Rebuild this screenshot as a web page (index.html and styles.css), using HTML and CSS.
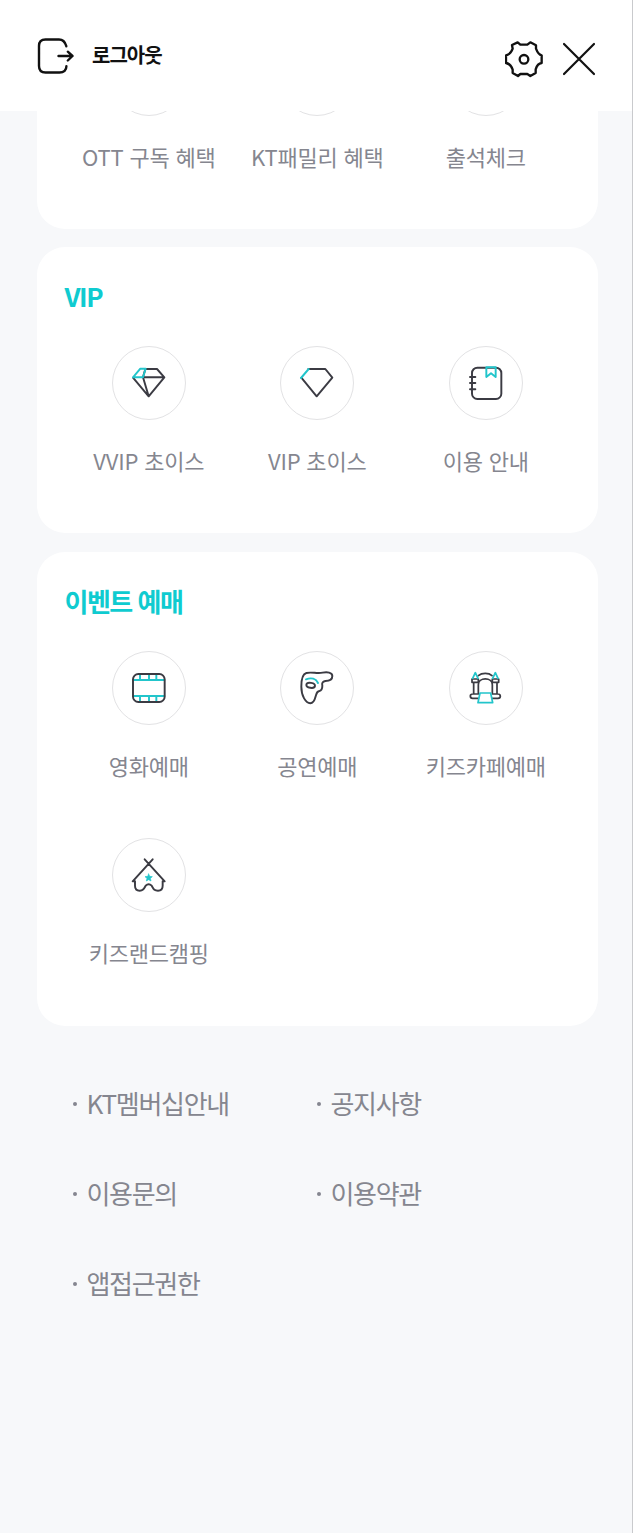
FILE: index.html
```
<!DOCTYPE html>
<html lang="ko">
<head>
<meta charset="utf-8">
<title>전체메뉴</title>
<link rel="stylesheet" href="styles.css">
</head>
<body>
<div class="app">
  <header class="header">
    <a class="logout">
      <svg class="logout-icon" viewBox="0 0 38 38"><path d="M29.3 9.2V9C28 4.600 26 2.500 22 2.500H8.500Q2 2.500 2 9V29Q2 35.500 8.500 35.500H22.500C27 35.500 29.400 33 29.400 29.200M21.500 19H35.500M30.800 14.700L35.500 19L30.800 23.500"/></svg>
      <span>로그아웃</span>
    </a>
    <div class="actions">
      <svg class="gear-icon" viewBox="45 58 114 114"><path d="M66 73L83 65L91 72H112L121 65L138 74V84C141 92 145 102 155 104V127C145 128 140 136 137 146V157L121 166L112 160H91L84 166L68 157V147C65 138 60 129 48 127V104C58 102 65 93 68 84Z"/><circle cx="102" cy="116" r="13"/></svg>
      <svg class="close-icon" viewBox="0 0 34 34"><path d="M2 2L32 32M32 2L2 32"/></svg>
    </div>
  </header>

  <main class="content">
    <section class="card card-scrolled">
      <ul class="grid">
        <li class="item"><span class="circle"></span><span class="label">OTT 구독 혜택</span></li>
        <li class="item"><span class="circle"></span><span class="label">KT패밀리 혜택</span></li>
        <li class="item"><span class="circle"></span><span class="label">출석체크</span></li>
      </ul>
    </section>

    <section class="card">
      <h2 class="title">VIP</h2>
      <ul class="grid">
        <li class="item"><span class="circle"><svg class="icon" viewBox="96 94 102 102"><path d="M135 103H171L193 128H129M129 128L146 185L193 128M146 185L99 129M129 128L136 103"/><path class="accent" d="M99 128L121 102H137L129 128Z"/></svg></span><span class="label">VVIP 초이스</span></li>
        <li class="item"><span class="circle"><svg class="icon" viewBox="99 94 102 102"><path d="M124 103H175L196 129L149 185L103 129"/><path class="accent" d="M102 130L125 103"/></svg></span><span class="label">VIP 초이스</span></li>
        <li class="item"><span class="circle"><svg class="icon" viewBox="102 93 102 102"><rect x="111" y="98" width="88" height="94" rx="16"/><path d="M105 126H121M105 144H121M105 163H121"/><path class="accent" d="M154 97H182V126L168 115L154 126Z"/></svg></span><span class="label">이용 안내</span></li>
      </ul>
    </section>

    <section class="card">
      <h2 class="title">이벤트 예매</h2>
      <ul class="grid">
        <li class="item"><span class="circle"><svg class="icon" viewBox="96 92 102 102"><path class="accent" d="M100 119H193M100 167H193M120 101V119M147 101V119M169 101V119M120 167V184M147 167V184M169 167V184"/><rect x="99" y="101" width="95" height="84" rx="16"/></svg></span><span class="label">영화예매</span></li>
        <li class="item"><span class="circle"><svg class="icon" viewBox="99 92 102 102"><path d="M118 98C135 94 150 101 167 97C180 94 196 96 196 107C196 119 187 122 175 122C167 124 164 128 166 136C166 145 165 150 157 152C149 153 149 158 146 168C143 180 137 189 130 189C116 188 103 167 103 139C103 119 106 101 118 98Z"/><ellipse cx="131" cy="135" rx="13" ry="7.500" transform="rotate(9 131 135)"/><path class="accent" d="M117 117C133 111 147 115 153 128"/></svg></span><span class="label">공연예매</span></li>
        <li class="item"><span class="circle"><svg class="icon icon-fine" viewBox="103 92 102 102"><path d="M131 106C142 97 162 97 172 106M131 157V133C131 110 173 110 173 133V157M112 116H131V126H112ZM173 116H192V126H173ZM117 126V160M187 126V160M131 174H114Q107 174 107 167Q107 161 115 161H131M173 161H189Q197 161 197 168Q197 174 190 174H173"/><path class="accent" d="M114 114L122 97L130 114M174 114L182 97L190 114M136 158H168L174 187H130Z"/></svg></span><span class="label">키즈카페예매</span></li>
        <li class="item"><span class="circle"><svg class="icon" viewBox="96 93 102 102"><path d="M134 97L194 163H188V176Q188 191 174 191C162 191 161 186 155 176Q146 167 137 176C131 187 128 191 119 191Q105 191 105 176V163H98L158 97"/><path class="star" d="M146 141L149 148L157 149L151 154L153 162L146 158L139 162L141 154L135 149L143 148Z"/></svg></span><span class="label">키즈랜드캠핑</span></li>
      </ul>
    </section>

    <ul class="links">
      <li><span>KT멤버십안내</span></li>
      <li><span>공지사항</span></li>
      <li><span>이용문의</span></li>
      <li><span>이용약관</span></li>
      <li><span>앱접근권한</span></li>
    </ul>
  </main>
</div>
</body>
</html>
```
FILE: styles.css
```
* { box-sizing: border-box; }

body {
  margin: 0;
  background: #f7f8fa;
  font-family: "Noto Sans CJK KR", "Noto Sans", sans-serif;
  color: #85868f;
}

ul { list-style: none; margin: 0; padding: 0; }

svg {
  fill: none;
  stroke-linecap: round;
  stroke-linejoin: round;
}

.app {
  height: 1533px;
  display: flex;
  flex-direction: column;
  border-right: 1px solid #c9cacd;
}

.header {
  flex: none;
  height: 111px;
  padding: 0 36px 0 37px;
  display: flex;
  align-items: center;
  justify-content: space-between;
  background: #fff;
}

.logout {
  display: flex;
  align-items: center;
  gap: 17px;
  color: #111;
  font-size: 20px;
  font-weight: 700;
  line-height: 30px;
  letter-spacing: -1px;
}

.logout span { padding-bottom: 1px; }

.logout-icon { width: 38px; height: 38px; stroke: #111; stroke-width: 2.4; }

.actions {
  display: flex;
  align-items: center;
  gap: 19px;
  padding-top: 7px;
}

.gear-icon { width: 38px; height: 38px; stroke: #111; stroke-width: 7; }
.close-icon { width: 34px; height: 34px; stroke: #111; stroke-width: 2.2; }

.content {
  flex: 1;
  overflow: hidden;
  padding: 0 34px 0 37px;
}

.card {
  margin-bottom: 19px;
  padding: 30px 28px 0 27.5px;
  background: #fff;
  border-radius: 28px;
}

.card-scrolled {
  margin-top: -168px;
  margin-bottom: 18px;
  padding-top: 98.500px;
}

.title {
  margin: 0 0 31px;
  font-size: 26px;
  font-weight: 700;
  line-height: 38px;
  letter-spacing: -1.5px;
  color: #0fcbd0;
}

.grid {
  display: grid;
  grid-template-columns: repeat(3, 1fr);
}

.item {
  height: 187.300px;
  display: flex;
  flex-direction: column;
  align-items: center;
  gap: 24px;
}

.circle {
  flex: none;
  width: 74px;
  height: 74px;
  display: flex;
  align-items: center;
  justify-content: center;
  border: 1.5px solid #e2e2e4;
  border-radius: 50%;
}

.icon {
  width: 34px;
  height: 34px;
  overflow: visible;
  stroke: #3b3b43;
  stroke-width: 5.8;
}

.icon-fine { stroke-width: 5.2; }
.icon .accent { stroke: #22c5cb; }
.icon .star { fill: #22c5cb; stroke: #22c5cb; stroke-width: 2; }

.label {
  font-size: 22px;
  font-weight: 400;
  line-height: 32px;
  letter-spacing: -0.2px;
  white-space: nowrap;
}

.links {
  display: grid;
  grid-template-columns: 244px 1fr;
  grid-auto-rows: 90px;
  padding: 14px 0 0 36px;
}

.links li {
  display: flex;
  align-items: center;
  gap: 9.5px;
  font-size: 26px;
  font-weight: 400;
  letter-spacing: -1.3px;
}

.links span { padding-bottom: 3px; }

.links li::before {
  content: "";
  width: 4px;
  height: 4px;
  border-radius: 50%;
  background: #85868f;
}
```
